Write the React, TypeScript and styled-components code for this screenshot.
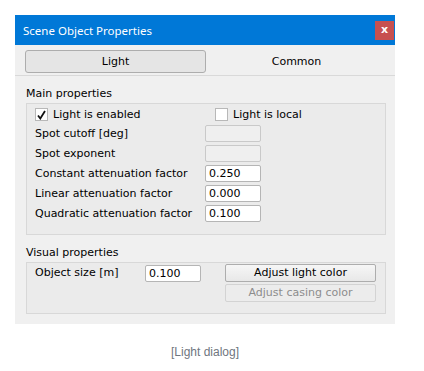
import styled, { createGlobalStyle } from 'styled-components'

const GlobalStyle = createGlobalStyle`
  body {
    margin: 0;
    background: #ffffff;
    font-family: "DejaVu Sans", sans-serif;
  }
`;

const Page = styled.div`
  padding: 15px 0 0 15px;
  width: 380px;
`;

const Dialog = styled.section`
  background: #f0f0f0;
  color: #000;
  font-size: 11px;
`;

const TitleBar = styled.header`
  height: 30px;
  background: #0078d7;
  color: #fff;
  display: flex;
  align-items: center;
  justify-content: space-between;
  padding-left: 8px;
  font-family: "Noto Sans", sans-serif;
  font-size: 11.5px;
`;

const CloseButton = styled.button`
  width: 19px;
  height: 19px;
  margin-right: 1px;
  border: 0;
  padding: 0 0 2px;
  background: #c75050;
  color: #fff;
  font: bold 11px "DejaVu Sans", sans-serif;
`;

const TabBar = styled.nav`
  display: grid;
  grid-template-columns: 181px 181px;
  padding: 5px 10px 2px;
  border-bottom: 1px solid #d9d9d9;
`;

const Tab = styled.div<{ $active?: boolean }>`
  height: 23px;
  box-sizing: border-box;
  display: flex;
  align-items: center;
  justify-content: center;
  border: 1px solid ${(p) => (p.$active ? '#adadad' : 'transparent')};
  border-radius: 3px;
  background: ${(p) => (p.$active ? '#e5e5e5' : 'transparent')};
`;

const Body = styled.div`
  padding: 10px 9px 10px 11px;
`;

const GroupTitle = styled.div<{ $top?: number }>`
  height: 15px;
  line-height: 15px;
  margin-top: ${(p) => p.$top ?? 0}px;
  margin-bottom: 2px;
`;

const GroupBox = styled.div<{ $pad: string }>`
  border: 1px solid #d8d8d8;
  background: #ebebeb;
  padding: ${(p) => p.$pad};
  display: flex;
  flex-direction: column;
`;

const Row = styled.div<{ $gap?: number }>`
  display: flex;
  align-items: center;
  height: 17px;
  margin-top: ${(p) => p.$gap ?? 0}px;
`;

const Label = styled.span<{ $width: number }>`
  width: ${(p) => p.$width}px;
  flex: none;
  white-space: nowrap;
`;

const CheckItem = styled.label<{ $width?: number }>`
  display: flex;
  align-items: center;
  gap: 5px;
  width: ${(p) => (p.$width ? `${p.$width}px` : 'auto')};
`;

const CheckBox = styled.span`
  width: 13px;
  height: 13px;
  box-sizing: border-box;
  border: 1px solid #b8b8b8;
  background: #fff;
  display: flex;
  align-items: center;
  justify-content: center;
`;

const Field = styled.div<{ $disabled?: boolean }>`
  width: 56px;
  height: 17px;
  flex: none;
  box-sizing: border-box;
  border: 1px solid ${(p) => (p.$disabled ? '#c9c9c9' : '#b5b5b5')};
  border-radius: 2px;
  background: ${(p) => (p.$disabled ? '#efefef' : '#fff')};
  padding-left: 3px;
  line-height: 15px;
`;

const VisualRow = styled.div`
  display: flex;
  align-items: flex-start;
  line-height: 18px;
`;

const Buttons = styled.div`
  display: flex;
  flex-direction: column;
  gap: 2px;
  margin-left: 24px;
`;

const Button = styled.div<{ $disabled?: boolean }>`
  width: 151px;
  height: 18px;
  box-sizing: border-box;
  border: 1px solid ${(p) => (p.$disabled ? '#d3d3d3' : '#adadad')};
  border-radius: 2px;
  background: ${(p) => (p.$disabled ? '#ececec' : 'linear-gradient(#f6f6f6, #e8e8e8)')};
  color: ${(p) => (p.$disabled ? '#8d8d8d' : '#000')};
  display: flex;
  align-items: center;
  justify-content: center;
`;

const Caption = styled.p`
  margin: 21px 0 0;
  text-align: center;
  font-family: "Liberation Sans", Arial, sans-serif;
  font-size: 12px;
  color: #6f7680;
`;

const Check = () => (
  <svg width="9" height="10" viewBox="0 0 9 10">
    <path d="M1 5.5 L3.3 8.5 L8 1" fill="none" stroke="#111" strokeWidth="1.8" />
  </svg>
);

const fields = [
  { label: 'Spot cutoff [deg]', value: '', disabled: true },
  { label: 'Spot exponent', value: '', disabled: true },
  { label: 'Constant attenuation factor', value: '0.250' },
  { label: 'Linear attenuation factor', value: '0.000' },
  { label: 'Quadratic attenuation factor', value: '0.100' },
];

export default function App() {
  return (
    <Page>
      <GlobalStyle />
      <Dialog>
        <TitleBar>
          <span>Scene Object Properties</span>
          <CloseButton>x</CloseButton>
        </TitleBar>
        <TabBar>
          <Tab $active>Light</Tab>
          <Tab>Common</Tab>
        </TabBar>
        <Body>
          <GroupTitle>Main properties</GroupTitle>
          <GroupBox $pad="2px 8px 12px">
            <Row>
              <CheckItem $width={180}>
                <CheckBox><Check /></CheckBox>
                Light is enabled
              </CheckItem>
              <CheckItem>
                <CheckBox />
                Light is local
              </CheckItem>
            </Row>
            {fields.map((f, i) => (
              <Row key={f.label} $gap={i === 0 ? 2 : 3}>
                <Label $width={170}>{f.label}</Label>
                <Field $disabled={f.disabled}>{f.value}</Field>
              </Row>
            ))}
          </GroupBox>
          <GroupTitle $top={10}>Visual properties</GroupTitle>
          <GroupBox $pad="1px 8px 11px">
            <VisualRow>
              <Label $width={110}>Object size [m]</Label>
              <Field style={{ marginTop: 1 }}>0.100</Field>
              <Buttons>
                <Button>Adjust light color</Button>
                <Button $disabled>Adjust casing color</Button>
              </Buttons>
            </VisualRow>
          </GroupBox>
        </Body>
      </Dialog>
      <Caption>[Light dialog]</Caption>
    </Page>
  );
}
